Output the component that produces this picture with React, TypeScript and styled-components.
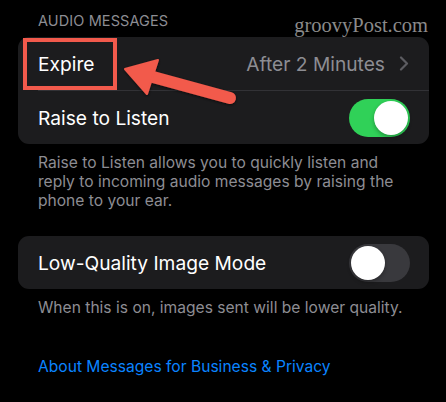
import React from 'react';
import styled, {createGlobalStyle} from 'styled-components';

const GlobalStyle = createGlobalStyle`
  html, body {
    margin: 0;
    background: #000000;
  }

  body {
    font-family: Inter, "Noto Sans", sans-serif;
    -webkit-font-smoothing: antialiased;
  }
`;

function Toggle({on}: {on: boolean}) {
  return (
    <Track $on={on}>
      <Knob $on={on} />
    </Track>
  );
}

function Chevron() {
  return (
    <svg width="10" height="15" viewBox="0 0 10 15" fill="none">
      <path d="M2 1.5L8 7.5L2 13.5" stroke="#5c5c61" strokeWidth="2.2" strokeLinecap="round" strokeLinejoin="round" />
    </svg>
  );
}

function Pointer() {
  return (
    <PointerSvg width="411" height="106" viewBox="0 0 411 106">
      <g filter="url(#pointer-shadow)">
        <line x1="124" y1="37" x2="212" y2="61" stroke="#f25a4c" strokeWidth="12" strokeLinecap="round" />
        <polygon points="107,32 140,23 129,57" fill="#f25a4c" strokeLinejoin="round" stroke="#f25a4c" strokeWidth="2" />
      </g>
      <defs>
        <filter id="pointer-shadow" x="-20%" y="-50%" width="140%" height="200%">
          <feDropShadow dx="0" dy="1" stdDeviation="1.5" floodColor="#000" floodOpacity="0.6" />
        </filter>
      </defs>
    </PointerSvg>
  );
}

function App() {
  return (
    <Page>
      <GlobalStyle />
      <HeaderRow>
        <SectionTitle>AUDIO MESSAGES</SectionTitle>
        <Watermark>groovyPost.com</Watermark>
      </HeaderRow>

      <Card>
        <Row>
          <Label>Expire</Label>
          <Value>
            After 2 Minutes
            <Chevron />
          </Value>
        </Row>
        <Separator />
        <Row>
          <Label>Raise to Listen</Label>
          <Toggle on />
        </Row>
        <Highlight />
        <Pointer />
      </Card>
      <Note>
        Raise to Listen allows you to quickly listen and reply to incoming audio messages by raising the phone to your
        ear.
      </Note>

      <Card $gap>
        <Row>
          <Label>Low-Quality Image Mode</Label>
          <Toggle on={false} />
        </Row>
      </Card>
      <Note>When this is on, images sent will be lower quality.</Note>

      <Link>About Messages for Business &amp; Privacy</Link>
    </Page>
  );
}

const Page = styled.div`
  padding: 12px 17px 0 18px;
  width: 411px;
`;

const HeaderRow = styled.div`
  display: flex;
  justify-content: space-between;
  align-items: flex-end;
  height: 17px;
  margin-bottom: 8px;
`;

const SectionTitle = styled.div`
  padding-left: 20px;
  font-size: 14.5px;
  line-height: 17px;
  color: #8d8d93;
  letter-spacing: 0.1px;
`;

const Watermark = styled.div`
  font-family: "Liberation Serif", serif;
  font-size: 20.5px;
  line-height: 20px;
  color: #8a8a8a;
  margin-right: 1px;
  transform: translateY(6px);
`;

const Card = styled.div<{$gap?: boolean}>`
  position: relative;
  display: flex;
  flex-direction: column;
  background: #1c1c1e;
  border-radius: 11px;
  margin-top: ${({$gap}) => ($gap ? '26px' : '0')};
`;

const Row = styled.div`
  display: flex;
  align-items: center;
  justify-content: space-between;
  height: 53px;
  padding: 0 19px 0 20px;
`;

const Separator = styled.div`
  height: 1px;
  margin-left: 20px;
  background: #323236;
`;

const Label = styled.div`
  font-size: 19.2px;
  color: #ffffff;
`;

const Value = styled.div`
  display: flex;
  align-items: center;
  gap: 14px;
  font-size: 19.2px;
  color: #8d8d93;
  padding-right: 1px;
`;

const Track = styled.div<{$on: boolean}>`
  position: relative;
  width: 61px;
  height: 38px;
  border-radius: 19px;
  background: ${({$on}) => ($on ? '#30d158' : '#39393d')};
`;

const Knob = styled.div<{$on: boolean}>`
  position: absolute;
  top: 2px;
  left: ${({$on}) => ($on ? '25px' : '2px')};
  width: 34px;
  height: 34px;
  border-radius: 50%;
  background: #ffffff;
  box-shadow: 0 2px 4px rgba(0, 0, 0, 0.3);
`;

const Note = styled.p`
  margin: 9px 0 0;
  padding: 0 20px;
  font-size: 15.6px;
  line-height: 19px;
  color: #8d8d93;
`;

const Link = styled.div`
  margin-top: 40px;
  padding: 0 20px;
  font-size: 15.6px;
  line-height: 19px;
  color: #0a84ff;
`;

const Highlight = styled.div`
  position: absolute;
  left: 5px;
  top: 1px;
  width: 94px;
  height: 52px;
  box-sizing: border-box;
  border: 4px solid #f25a4c;
`;

const PointerSvg = styled.svg`
  position: absolute;
  left: 0;
  top: 0;
  overflow: visible;
`;

export default App;
